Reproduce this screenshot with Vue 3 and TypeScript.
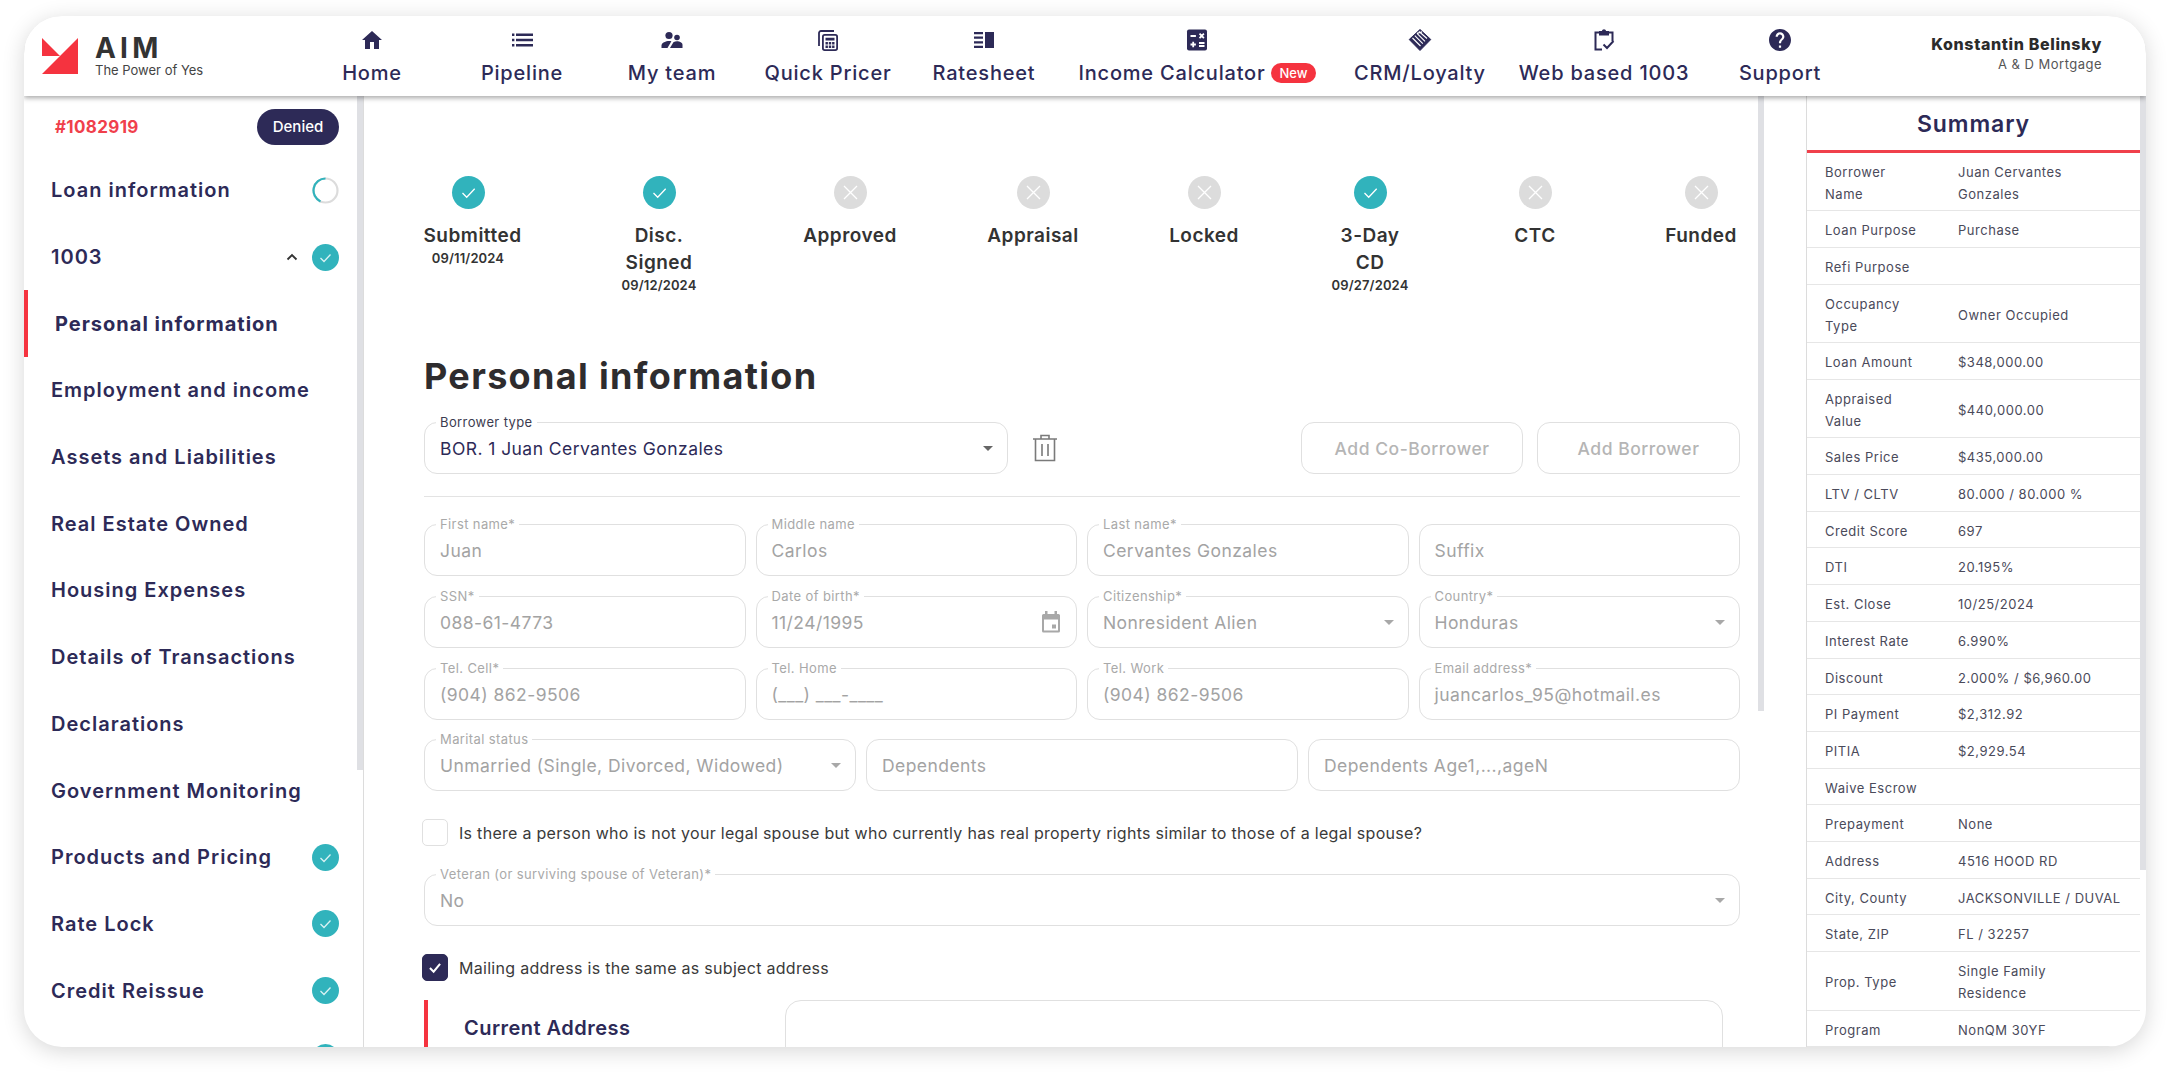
<script setup lang="ts">
interface Step { label: string[]; date?: string; done: boolean; gap: number }
interface Field { label?: string; value: string; select?: boolean; date?: boolean }

const navItems = [
  { name: 'home', label: 'Home', width: 148 },
  { name: 'list', label: 'Pipeline', width: 152 },
  { name: 'team', label: 'My team', width: 148 },
  { name: 'pricer', label: 'Quick Pricer', width: 164 },
  { name: 'sheet', label: 'Ratesheet', width: 148 },
  { name: 'calc', label: 'Income Calculator', width: 278, badge: 'New' },
  { name: 'crm', label: 'CRM/Loyalty', width: 168 },
  { name: 'form', label: 'Web based 1003', width: 200 },
  { name: 'help', label: 'Support', width: 152 }
]

const sideItems = [
  { label: 'Loan information', status: 'progress' },
  { label: '1003', status: 'done', open: true },
  { label: 'Personal information', active: true },
  { label: 'Employment and income' },
  { label: 'Assets and Liabilities' },
  { label: 'Real Estate Owned' },
  { label: 'Housing Expenses' },
  { label: 'Details of Transactions' },
  { label: 'Declarations' },
  { label: 'Government Monitoring' },
  { label: 'Products and Pricing', status: 'done' },
  { label: 'Rate Lock', status: 'done' },
  { label: 'Credit Reissue', status: 'done' },
  { label: '', status: 'done' }
]

const steps: Step[] = [
  { label: ['Submitted'], date: '09/11/2024', done: true, gap: 8 },
  { label: ['Disc.', 'Signed'], date: '09/12/2024', done: true, gap: 119 },
  { label: ['Approved'], done: false, gap: 119 },
  { label: ['Appraisal'], done: false, gap: 111 },
  { label: ['Locked'], done: false, gap: 99 },
  { label: ['3-Day', 'CD'], date: '09/27/2024', done: true, gap: 94 },
  { label: ['CTC'], done: false, gap: 93 },
  { label: ['Funded'], done: false, gap: 94 }
]

const fourCols: Field[] = [
  { label: 'First name*', value: 'Juan' },
  { label: 'Middle name', value: 'Carlos' },
  { label: 'Last name*', value: 'Cervantes Gonzales' },
  { value: 'Suffix' },
  { label: 'SSN*', value: '088-61-4773' },
  { label: 'Date of birth*', value: '11/24/1995', date: true },
  { label: 'Citizenship*', value: 'Nonresident Alien', select: true },
  { label: 'Country*', value: 'Honduras', select: true },
  { label: 'Tel. Cell*', value: '(904) 862-9506' },
  { label: 'Tel. Home', value: '(___) ___-____' },
  { label: 'Tel. Work', value: '(904) 862-9506' },
  { label: 'Email address*', value: 'juancarlos_95@hotmail.es' }
]

const threeCols: Field[] = [
  { label: 'Marital status', value: 'Unmarried (Single, Divorced, Widowed)', select: true },
  { value: 'Dependents' },
  { value: 'Dependents Age1,...,ageN' }
]

const summary = [
  ['Borrower\nName', 'Juan Cervantes\nGonzales'],
  ['Loan Purpose', 'Purchase'],
  ['Refi Purpose', ''],
  ['Occupancy\nType', 'Owner Occupied'],
  ['Loan Amount', '$348,000.00'],
  ['Appraised\nValue', '$440,000.00'],
  ['Sales Price', '$435,000.00'],
  ['LTV / CLTV', '80.000 / 80.000 %'],
  ['Credit Score', '697'],
  ['DTI', '20.195%'],
  ['Est. Close', '10/25/2024'],
  ['Interest Rate', '6.990%'],
  ['Discount', '2.000% / $6,960.00'],
  ['PI Payment', '$2,312.92'],
  ['PITIA', '$2,929.54'],
  ['Waive Escrow', ''],
  ['Prepayment', 'None'],
  ['Address', '4516 HOOD RD'],
  ['City, County', 'JACKSONVILLE / DUVAL'],
  ['State, ZIP', 'FL / 32257'],
  ['Prop. Type', 'Single Family\nResidence'],
  ['Program', 'NonQM 30YF']
]
</script>

<template>
  <div class="page">
    <div class="card">
      <header class="topbar">
        <div class="brand">
          <svg class="brand-mark" viewBox="0 0 36 36" aria-hidden="true">
            <path d="M0 0 L18 18 L0 18 Z" fill="#f5333f" />
            <path d="M36 0 V36 H0 L18 18 Z" fill="#f5333f" />
          </svg>
          <div class="brand-text">
            <div class="brand-name">AIM</div>
            <div class="brand-tag">The Power of Yes</div>
          </div>
        </div>
        <nav class="nav">
          <a v-for="item in navItems" :key="item.name" class="nav-item" :style="{ width: item.width + 'px' }">
            <svg class="nav-icon" viewBox="0 0 24 24" aria-hidden="true">
              <path v-if="item.name === 'home'" d="M10 21v-7h4v7h5v-9h3L12 3 2 12h3v9z" fill="currentColor" />
              <path v-else-if="item.name === 'list'" d="M2 5.500h2.400v2.400H2zM6 5.500h17v2.400H6zM2 10.800h2.400v2.400H2zM6 10.800h17v2.400H6zM2 16.100h2.400v2.400H2zM6 16.100h17v2.400H6z" fill="currentColor" />
              <g v-else-if="item.name === 'team'" fill="currentColor">
                <circle cx="9" cy="7.500" r="3.600" />
                <circle cx="17" cy="9.500" r="2.800" />
                <path d="M1.500 20v-2.500C1.500 14.500 6 13 9 13c.8 0 1.600.1 2.400.3L7.500 20z" />
                <path d="M10 20l3.400-5.800c1-.6 2.400-.9 3.600-.9 2.500 0 5.500 1.200 5.500 3.600V20z" />
              </g>
              <g v-else-if="item.name === 'pricer'">
                <path d="M3 18V5a2 2 0 0 1 2-2h13" fill="none" stroke="currentColor" stroke-width="1.800" />
                <rect x="6.900" y="6.900" width="14.200" height="15.200" rx="1.800" fill="none" stroke="currentColor" stroke-width="1.800" />
                <path d="M9.500 9.800h9v2.600h-9zM9.500 14h2.400v2.400h-2.400zM12.800 14h2.400v2.400h-2.400zM16.100 14h2.400v2.400h-2.400zM9.500 17.600h2.400v2.400h-2.400zM12.800 17.600h2.400v2.400h-2.400zM16.100 17.600h2.400v2.400h-2.400z" fill="currentColor" />
              </g>
              <path v-else-if="item.name === 'sheet'" d="M2 4h9v2.200H2zM2 8.600h9v2.200H2zM2 13.200h9v2.200H2zM2 17.800h9V20H2zM13 4h9v16h-9z" fill="currentColor" />
              <g v-else-if="item.name === 'calc'">
                <rect x="2" y="1.500" width="20" height="21" rx="2" fill="currentColor" />
                <path d="M5.500 8h5.400M8.200 13.800v5.400M5.500 16.500h5.400M14 15h5.500M14 18h5.500M14.500 5.700l4.400 4.400M18.900 5.700l-4.400 4.400" fill="none" stroke="#fff" stroke-width="1.800" />
              </g>
              <g v-else-if="item.name === 'crm'">
                <path d="M12 1.500 22.800 11.500 12 22.500 1.200 11.500Z" fill="currentColor" stroke="currentColor" stroke-linejoin="round" />
                <path d="M4.500 10l8 8M6.800 7.600l8 8M9 5.400l8 8M11 3.500l8 7M9 5.400l5-1.500" fill="none" stroke="#fff" stroke-width="1.100" />
              </g>
              <g v-else-if="item.name === 'form'">
                <path d="M10 21.500H3.500V4.500H7M15 4.500h5.500V13" fill="none" stroke="currentColor" stroke-width="2" />
                <path d="M7 3h2.800a2.300 2.300 0 0 1 4.400 0H17v4.500H7z" fill="currentColor" />
                <path d="M11.500 16.500l3.500 3.500 6.500-7" fill="none" stroke="currentColor" stroke-width="2" />
              </g>
              <path v-else transform="translate(-1.200 -1.200) scale(1.100)" d="M12 2C6.480 2 2 6.480 2 12s4.480 10 10 10 10-4.480 10-10S17.520 2 12 2zm1 17h-2v-2h2v2zm2.070-7.750l-.9.920C13.450 12.900 13 13.500 13 15h-2v-.5c0-1.100.45-2.100 1.170-2.830l1.240-1.260c.37-.36.59-.86.59-1.410 0-1.100-.9-2-2-2s-2 .9-2 2H8c0-2.210 1.790-4 4-4s4 1.790 4 4c0 .88-.36 1.680-.93 2.250z" fill="currentColor" />
            </svg>
            <span class="nav-label">
              {{ item.label }}
              <span v-if="item.badge" class="nav-badge">{{ item.badge }}</span>
            </span>
          </a>
        </nav>
        <div class="user">
          <div class="user-name">Konstantin Belinsky</div>
          <div class="user-org">A &amp; D Mortgage</div>
        </div>
      </header>

      <div class="body">
        <aside class="sidebar">
          <div class="side-head">
            <span class="loan-id">#1082919</span>
            <span class="pill">Denied</span>
          </div>
          <div
            v-for="(item, i) in sideItems"
            :key="i"
            class="side-item"
            :class="{ active: item.active }"
          >
            <span class="side-label">{{ item.label }}</span>
            <svg v-if="item.open" class="chevron" viewBox="0 0 12 8" aria-hidden="true">
              <path d="M1.500 6.500 6 2l4.500 4.500" fill="none" stroke="currentColor" stroke-width="1.800" />
            </svg>
            <svg v-if="item.status === 'progress'" class="side-status" viewBox="0 0 27 27" aria-hidden="true">
              <circle cx="13.500" cy="13.500" r="12" fill="none" stroke="#dcdcdc" stroke-width="2.200" />
              <path d="M13.500 1.500a12 12 0 0 0-5 22.900" fill="none" stroke="#31b3bc" stroke-width="2.200" />
            </svg>
            <svg v-if="item.status === 'done'" class="side-status" viewBox="0 0 27 27" aria-hidden="true">
              <circle cx="13.500" cy="13.500" r="13.500" fill="#31b3bc" />
              <path d="M8.500 14l3.500 3.500 6.500-7" fill="none" stroke="#d9f2f3" stroke-width="1.300" />
            </svg>
          </div>
          <div class="side-scroll"></div>
        </aside>

        <main class="main">
          <div class="stepper">
            <div
              v-for="step in steps"
              :key="step.label[0]"
              class="step"
              :style="{ marginLeft: step.gap + 'px' }"
            >
              <span class="step-dot" :class="{ done: step.done }">
                <svg viewBox="0 0 33 33" aria-hidden="true">
                  <path v-if="step.done" d="M10.500 17l4.200 4.200 8-8.500" fill="none" stroke="#fff" stroke-width="1.300" />
                  <path v-else d="M10 10l13 13M23 10 10 23" fill="none" stroke="#fff" stroke-width="1.300" />
                </svg>
              </span>
              <span v-for="line in step.label" :key="line" class="step-label">{{ line }}</span>
              <span v-if="step.date" class="step-date">{{ step.date }}</span>
            </div>
          </div>

          <h1 class="title">Personal information</h1>

          <div class="borrower-row">
            <div class="field borrower">
              <span class="field-label dark">Borrower type</span>
              <span class="field-value dark">BOR. 1 Juan Cervantes Gonzales</span>
              <span class="caret dark"></span>
            </div>
            <svg class="trash" viewBox="0 0 26 28" aria-hidden="true">
              <path d="M1 5h24M9 5V1.500h8V5M3.500 5v21.500h19V5M10 10v12M16 10v12" fill="none" stroke="#7a7a7a" stroke-width="1.600" />
            </svg>
            <button class="ghost-btn co" type="button">Add Co-Borrower</button>
            <button class="ghost-btn add" type="button">Add Borrower</button>
          </div>

          <hr class="rule" />

          <div class="grid four">
            <div v-for="f in fourCols" :key="f.value + f.label" class="field">
              <span v-if="f.label" class="field-label">{{ f.label }}</span>
              <span class="field-value">{{ f.value }}</span>
              <span v-if="f.select" class="caret"></span>
              <svg v-if="f.date" class="cal" viewBox="0 0 20 22" aria-hidden="true">
                <path d="M1 4.500a1.500 1.500 0 0 1 1.500-1.500H4V0h2.500v3h7V0H16v3h1.500A1.500 1.500 0 0 1 19 4.500V20a1.500 1.500 0 0 1-1.500 1.500h-15A1.500 1.500 0 0 1 1 20zM3 8.500V19.500h14V8.500zM11 13.500h4V17.500h-4z" fill="#a8a8a8" fill-rule="evenodd" />
              </svg>
            </div>
          </div>
          <div class="grid three">
            <div v-for="f in threeCols" :key="f.value" class="field">
              <span v-if="f.label" class="field-label">{{ f.label }}</span>
              <span class="field-value">{{ f.value }}</span>
              <span v-if="f.select" class="caret"></span>
            </div>
          </div>

          <label class="check-row first">
            <span class="box"></span>
            Is there a person who is not your legal spouse but who currently has real property rights similar to those of a legal spouse?
          </label>

          <div class="field veteran">
            <span class="field-label">Veteran (or surviving spouse of Veteran)*</span>
            <span class="field-value">No</span>
            <span class="caret"></span>
          </div>

          <label class="check-row second">
            <span class="box checked">
              <svg viewBox="0 0 26 26" aria-hidden="true">
                <path d="M7.500 13.500l4 4 7-8.500" fill="none" stroke="#fff" stroke-width="2.200" />
              </svg>
            </span>
            Mailing address is the same as subject address
          </label>

          <section class="address">
            <h2 class="address-title">Current Address</h2>
            <div class="address-box"></div>
          </section>
          <div class="main-scroll"></div>
        </main>

        <aside class="summary">
          <h2 class="summary-title">Summary</h2>
          <div v-for="row in summary" :key="row[0]" class="summary-row">
            <span>{{ row[0] }}</span>
            <span>{{ row[1] }}</span>
          </div>
          <div class="summary-scroll"></div>
        </aside>
      </div>
    </div>
  </div>
</template>

<style>
html, body {
  background: #fff;
}
</style>

<style scoped>
.page {
  width: 2170px;
  height: 1079px;
  padding: 16px 24px 32px;
  box-sizing: border-box;
  font-family: Inter, "Noto Sans", sans-serif;
  letter-spacing: 0.03em;
  color: #2d2a57;
  overflow: hidden;
}

.card {
  height: 1031px;
  border-radius: 38px;
  background: #fff;
  overflow: hidden;
  box-shadow: 0 4px 22px rgba(0, 0, 0, 0.16);
  display: flex;
  flex-direction: column;
}

.topbar {
  height: 80px;
  flex: none;
  display: flex;
  position: relative;
  z-index: 2;
  background: #fff;
  box-shadow: 0 2px 5px rgba(0, 0, 0, 0.35);
}

.brand {
  width: 274px;
  flex: none;
  display: flex;
  align-items: center;
  gap: 17px;
  padding-left: 18px;
  box-sizing: border-box;
}

.brand-mark {
  width: 36px;
  height: 36px;
}

.brand-name {
  font-size: 28px;
  font-weight: 700;
  line-height: 27px;
  letter-spacing: 0.15em;
  color: #333;
}

.brand-tag {
  font-size: 13px;
  line-height: 16px;
  letter-spacing: 0;
  color: #444;
}

.nav {
  display: flex;
}

.nav-item {
  display: flex;
  flex-direction: column;
  align-items: center;
  padding-top: 12px;
  box-sizing: border-box;
}

.nav-icon {
  width: 24px;
  height: 24px;
  flex: none;
}

.nav-label {
  margin-top: 9px;
  font-size: 20px;
  font-weight: 500;
  line-height: 24px;
  letter-spacing: 0.04em;
  white-space: nowrap;
  display: flex;
  align-items: center;
  gap: 6px;
}

.nav-badge {
  background: #f5333f;
  color: #fff;
  font-size: 13px;
  line-height: 20px;
  padding: 0 8px;
  border-radius: 10px;
  letter-spacing: 0;
}

.user {
  margin-left: auto;
  padding: 18px 44px 0 0;
  text-align: right;
}

.user-name {
  font-size: 16px;
  font-weight: 800;
  line-height: 20px;
  color: #2b2b2b;
  letter-spacing: 0.04em;
}

.user-org {
  font-size: 13px;
  line-height: 20px;
  color: #555;
}

.body {
  flex: 1;
  display: flex;
  min-height: 0;
}

.sidebar {
  width: 340px;
  flex: none;
  border-right: 1px solid #dcdcdc;
  box-sizing: border-box;
  position: relative;
  overflow: hidden;
}

.side-head {
  height: 61px;
  display: flex;
  align-items: center;
  justify-content: space-between;
  padding: 0 24px 0 31px;
  box-sizing: border-box;
}

.loan-id {
  color: #f0404b;
  font-size: 17px;
  font-weight: 700;
  letter-spacing: 0.02em;
}

.pill {
  width: 82px;
  height: 36px;
  border-radius: 18px;
  background: #2d2a57;
  color: #fff;
  font-size: 15px;
  font-weight: 500;
  letter-spacing: 0;
  display: flex;
  align-items: center;
  justify-content: center;
}

.side-item {
  height: 66.700px;
  display: flex;
  align-items: center;
  padding: 0 24px 0 27px;
  box-sizing: border-box;
  position: relative;
}

.side-item.active {
  padding-left: 31px;
  box-shadow: inset 4px 0 0 #f5333f;
}

.side-item.active .side-label {
  font-weight: 700;
}

.side-label {
  flex: 1;
  font-size: 20px;
  font-weight: 600;
  letter-spacing: 0.05em;
  white-space: nowrap;
}

.chevron {
  width: 12px;
  height: 8px;
  margin-right: 14px;
  color: #333;
}

.side-status {
  width: 27px;
  height: 27px;
  flex: none;
}

.side-scroll {
  position: absolute;
  top: 0;
  right: 0;
  width: 6px;
  height: 674px;
  background: #dfe0e4;
}

.main {
  width: 1442px;
  flex: none;
  padding: 80px 0 0 60px;
  box-sizing: border-box;
  position: relative;
  overflow: hidden;
}

.stepper {
  display: flex;
  height: 178px;
}

.step {
  width: 72px;
  flex: none;
  display: flex;
  flex-direction: column;
  align-items: center;
}

.step:first-child .step-label {
  margin-left: 9px;
}

.step-dot {
  width: 33px;
  height: 33px;
  border-radius: 50%;
  background: #dcdcdc;
  margin-bottom: 13px;
}

.step-dot.done {
  background: #31b3bc;
}

.step-dot svg {
  display: block;
}

.step-label {
  font-size: 19px;
  font-weight: 600;
  line-height: 27px;
  color: #333;
  white-space: nowrap;
}

.step-date {
  font-size: 13px;
  font-weight: 600;
  line-height: 18px;
  color: #333;
  white-space: nowrap;
  letter-spacing: 0.01em;
}

.title {
  margin: 0;
  font-size: 36px;
  font-weight: 700;
  line-height: 44px;
  color: #2e2c2e;
  letter-spacing: 0.037em;
}

.borrower-row {
  display: flex;
  align-items: center;
  width: 1316px;
  margin-top: 24px;
}

.field {
  position: relative;
  height: 52px;
  border: 1px solid #e0e0e0;
  border-radius: 13px;
  box-sizing: border-box;
  display: flex;
  align-items: center;
  padding: 0 15px;
}

.borrower {
  width: 584px;
}

.field-label {
  position: absolute;
  top: -9px;
  left: 11px;
  padding: 0 4px;
  background: #fff;
  font-size: 13px;
  line-height: 16px;
  letter-spacing: 0.03em;
  color: #a9a9a9;
  white-space: nowrap;
}

.field-label.dark {
  color: #3c3c50;
}

.field-value {
  font-size: 17.500px;
  color: #a3a3a3;
  white-space: nowrap;
  letter-spacing: 0.025em;
}

.field-value.dark {
  color: #2d2a57;
}

.caret {
  position: absolute;
  right: 14px;
  top: 23px;
  width: 0;
  height: 0;
  border-left: 5px solid transparent;
  border-right: 5px solid transparent;
  border-top: 5px solid #a8a8a8;
}

.caret.dark {
  border-top-color: #666;
}

.trash {
  width: 26px;
  height: 28px;
  margin-left: 24px;
}

.ghost-btn {
  height: 52px;
  border: 1px solid #e0e0e0;
  border-radius: 13px;
  background: #fff;
  color: #b5b5b5;
  font: 500 17.500px Inter, sans-serif;
  letter-spacing: 0.03em;
}

.ghost-btn.co {
  width: 222px;
  margin-left: auto;
}

.ghost-btn.add {
  width: 203px;
  margin-left: 14px;
}

.rule {
  width: 1316px;
  margin: 22px 0 27px;
  border: 0;
  border-top: 1px solid #e3e3e3;
}

.grid {
  display: grid;
  width: 1316px;
  column-gap: 10px;
  row-gap: 20px;
}

.grid.four {
  grid-template-columns: repeat(4, 1fr);
}

.grid.three {
  grid-template-columns: repeat(3, 1fr);
  margin-top: 19px;
}

.cal {
  position: absolute;
  right: 15px;
  top: 14px;
  width: 20px;
  height: 22px;
}

.check-row {
  display: flex;
  align-items: center;
  gap: 11px;
  font-size: 16px;
  letter-spacing: 0.018em;
  color: #3a3a3a;
  margin-left: -2px;
  white-space: nowrap;
}

.check-row.first {
  margin-top: 28px;
}

.check-row.second {
  margin-top: 28px;
}

.box {
  width: 26px;
  height: 27px;
  border: 1px solid #e0e0e0;
  border-radius: 5px;
  box-sizing: border-box;
  flex: none;
}

.box.checked {
  background: #2d2a57;
  border-color: #2d2a57;
}

.box svg {
  display: block;
  width: 100%;
  height: 100%;
}

.veteran {
  width: 1316px;
  margin-top: 28px;
}

.address {
  display: flex;
  margin-top: 19px;
  width: 1299px;
  height: 100px;
  border-left: 4px solid #f5333f;
  box-sizing: border-box;
}

.address-title {
  width: 357px;
  flex: none;
  margin: 16px 0 0;
  padding-left: 36px;
  box-sizing: border-box;
  font-size: 20px;
  font-weight: 600;
  line-height: 24px;
}

.address-box {
  flex: 1;
  border: 1px solid #e0e0e0;
  border-radius: 16px;
}

.main-scroll {
  position: absolute;
  top: 0;
  right: 42px;
  width: 6px;
  height: 615px;
  background: #dfe0e4;
}

.summary {
  flex: 1;
  position: relative;
  border-left: 1px solid #dcdcdc;
  overflow: hidden;
}

.summary-title {
  margin: 0 6px 0 0;
  height: 57px;
  border-bottom: 3px solid #f0404b;
  box-sizing: border-box;
  text-align: center;
  font-size: 23px;
  font-weight: 600;
  line-height: 57px;
  letter-spacing: 0.04em;
}

.summary-row {
  display: grid;
  grid-template-columns: 133px 1fr;
  align-items: center;
  padding: 9px 0 5px 18px;
  margin-right: 6px;
  box-sizing: border-box;
  border-bottom: 1px solid #e6e6e6;
  font-size: 13px;
  line-height: 21.700px;
  letter-spacing: 0.04em;
  color: #4a4a5a;
}

.summary-row span {
  white-space: pre;
}

.summary-scroll {
  position: absolute;
  top: 0;
  right: 0;
  width: 6px;
  height: 774px;
  background: #dfe0e4;
}
</style>
